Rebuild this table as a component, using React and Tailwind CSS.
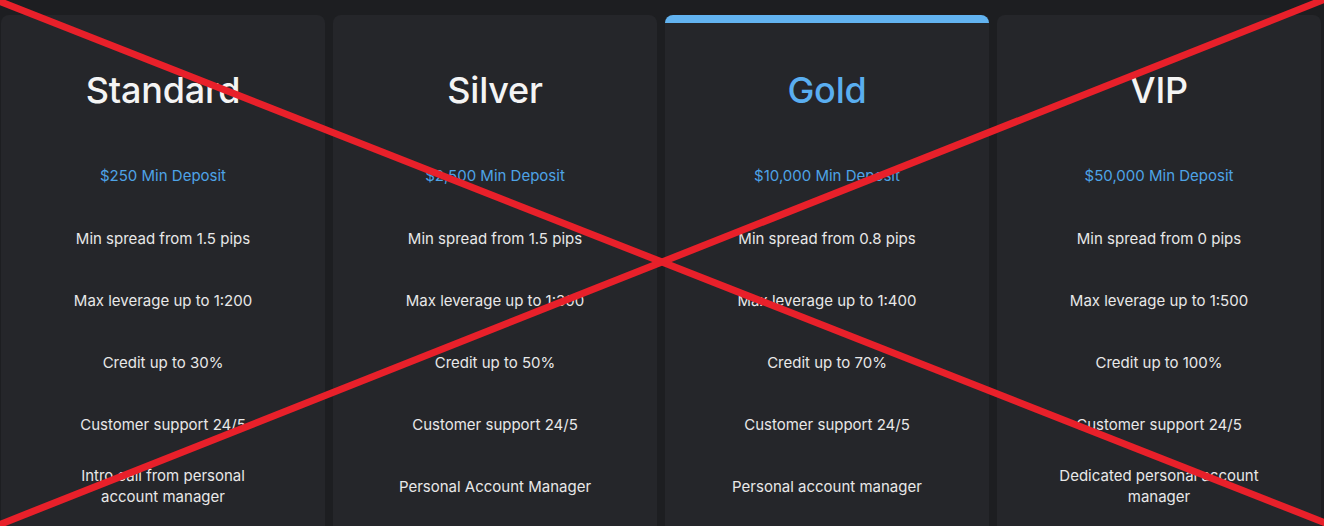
import React from "react";

const plans = [
  {
    name: "Standard",
    deposit: "$250 Min Deposit",
    features: [
      "Min spread from 1.5 pips",
      "Max leverage up to 1:200",
      "Credit up to 30%",
      "Customer support 24/5",
      "Intro call from personal account manager",
    ],
  },
  {
    name: "Silver",
    deposit: "$2,500 Min Deposit",
    features: [
      "Min spread from 1.5 pips",
      "Max leverage up to 1:300",
      "Credit up to 50%",
      "Customer support 24/5",
      "Personal Account Manager",
    ],
  },
  {
    name: "Gold",
    deposit: "$10,000 Min Deposit",
    featured: true,
    features: [
      "Min spread from 0.8 pips",
      "Max leverage up to 1:400",
      "Credit up to 70%",
      "Customer support 24/5",
      "Personal account manager",
    ],
  },
  {
    name: "VIP",
    deposit: "$50,000 Min Deposit",
    features: [
      "Min spread from 0 pips",
      "Max leverage up to 1:500",
      "Credit up to 100%",
      "Customer support 24/5",
      "Dedicated personal account manager",
    ],
  },
];

function Card({ plan }) {
  return (
    <div
      className={
        "w-[324px] shrink-0 h-[560px] rounded-lg bg-[#25262a] flex flex-col items-center " +
        (plan.featured
          ? "border-t-[8px] border-[#62b3f0] pt-[47px]"
          : "pt-[55px]")
      }
    >
      <div
        className={
          "text-[36px] leading-[40px] font-medium tracking-[-0.2px] " +
          (plan.featured ? "text-[#5aaef0]" : "text-[#f4f4f4]")
        }
      >
        {plan.name}
      </div>
      <div className="mt-[35px] w-full flex flex-col items-center">
        <div className="h-[62px] flex items-center justify-center text-[15px] text-[#4ea3e6]">
          {plan.deposit}
        </div>
        {plan.features.map((f) => (
          <div
            key={f}
            className="h-[62px] w-[214px] flex items-center justify-center text-center text-[15px] leading-[21px] text-[#e8e8e8]"
          >
            {f}
          </div>
        ))}
      </div>
    </div>
  );
}

export default function App() {
  return (
    <div
      className="relative w-[1324px] h-[526px] overflow-hidden bg-[#1d1e21]"
      style={{ fontFamily: "Inter, 'Noto Sans', sans-serif" }}
    >
      <div className="flex gap-[8px] pl-[1px] pt-[15px]">
        {plans.map((p) => (
          <Card key={p.name} plan={p} />
        ))}
      </div>
      <svg
        className="absolute inset-0 pointer-events-none"
        width="1324"
        height="526"
        viewBox="0 0 1324 526"
      >
        <line x1="-4" y1="0" x2="1328" y2="524" stroke="#e8202a" strokeWidth="7" />
        <line x1="1328" y1="-2" x2="-4" y2="526" stroke="#e8202a" strokeWidth="7" />
      </svg>
    </div>
  );
}
